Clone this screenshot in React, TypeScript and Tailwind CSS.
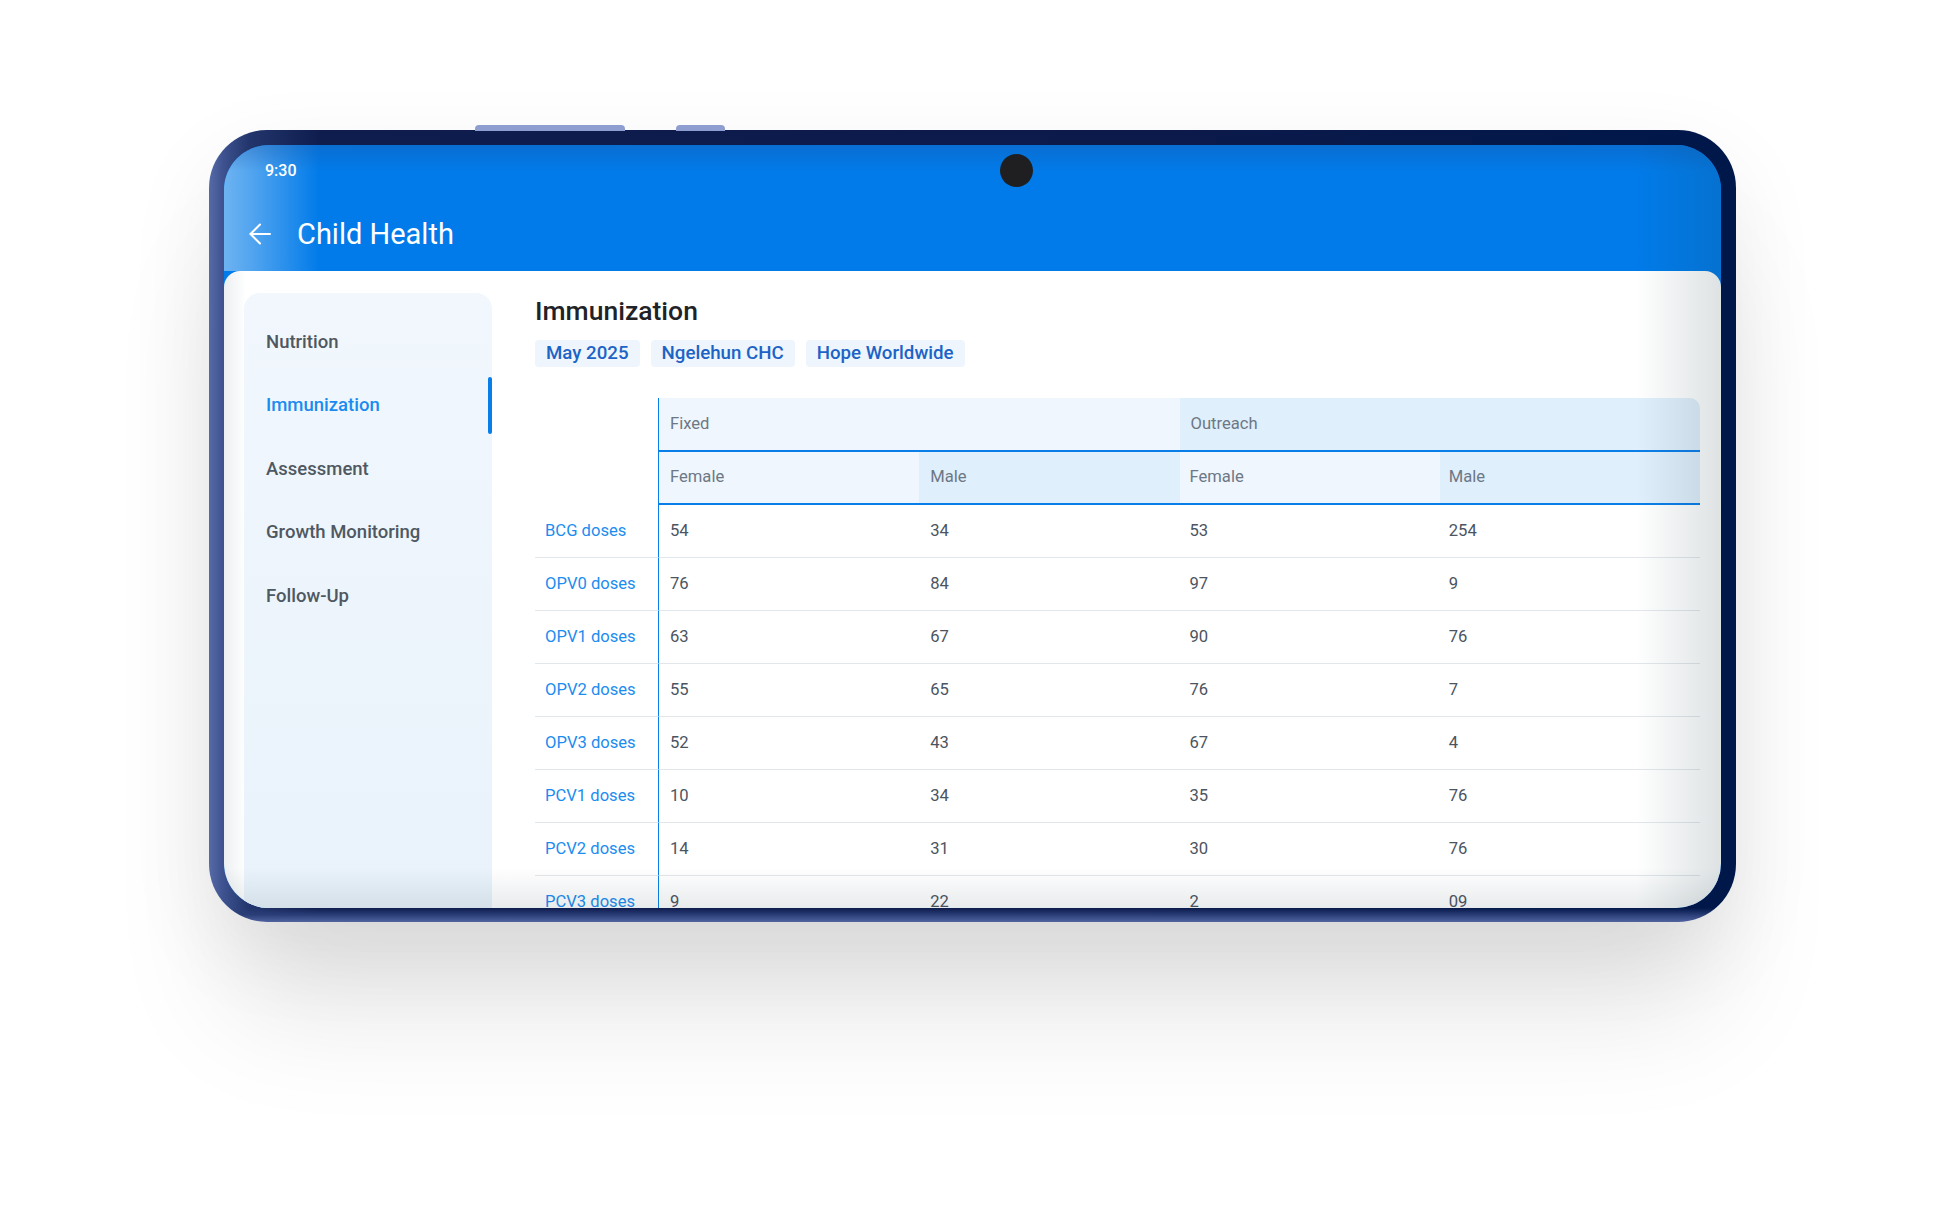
import React from 'react';

const rows: [string, string, string, string, string][] = [
  ['BCG doses', '54', '34', '53', '254'],
  ['OPV0 doses', '76', '84', '97', '9'],
  ['OPV1 doses', '63', '67', '90', '76'],
  ['OPV2 doses', '55', '65', '76', '7'],
  ['OPV3 doses', '52', '43', '67', '4'],
  ['PCV1 doses', '10', '34', '35', '76'],
  ['PCV2 doses', '14', '31', '30', '76'],
  ['PCV3 doses', '9', '22', '2', '09'],
];

const navItems = ['Nutrition', 'Immunization', 'Assessment', 'Growth Monitoring', 'Follow-Up'];
const chips = ['May 2025', 'Ngelehun CHC', 'Hope Worldwide'];

export default function App() {
  return (
    <div className="relative w-full h-[1214px] bg-white pt-[130px] pl-[209px] font-['Roboto','Liberation_Sans',sans-serif] overflow-hidden">
      {/* device */}
      <div className="relative w-[1527px] h-[792px] rounded-[58px] pt-[15px] px-[15px] pb-[14px] bg-[linear-gradient(to_top,#5064a0_0px,#2b3e78_7px,rgba(20,35,85,0)_14px),linear-gradient(to_right,#566ba6_0px,#3d528f_14px,#22356c_40px,#0f1d4e_110px,#0c1a4b_60%,#001749_100%)] shadow-[0_110px_120px_-20px_rgba(0,0,0,0.10),0_30px_90px_rgba(0,0,0,0.07)]">
        {/* side buttons on top edge */}
        <div className="absolute top-[-5px] left-[266px] w-[150px] h-[6px] rounded-t-[4px] bg-[#8e9ed1]" />
        <div className="absolute top-[-5px] left-[467px] w-[49px] h-[6px] rounded-t-[4px] bg-[#8e9ed1]" />

        {/* screen */}
        <div className="relative w-full h-full rounded-[45px] overflow-hidden bg-[#017be9] flex flex-col">
          {/* header */}
          <div className="h-[126px] shrink-0 flex flex-col text-white bg-[linear-gradient(to_bottom,rgba(25,85,165,0.35)_0px,rgba(25,85,165,0)_26px),linear-gradient(to_right,#6db3f1_0px,#4fa3ef_30px,#017be9_95px)]">
            <div className="relative h-[52px] flex items-center pl-[41px]">
              <span className="text-[16px] font-medium">9:30</span>
              <div className="absolute left-[776px] top-[9px] w-[33px] h-[33px] rounded-full bg-[#1f1f22]" />
            </div>
            <div className="flex-1 flex items-center pl-[25px] gap-[27px]">
              <svg width="22" height="22" viewBox="0 0 22 22" fill="none" stroke="white" strokeWidth="2" strokeLinecap="round" strokeLinejoin="round">
                <path d="M21 11H1.5" />
                <path d="M11 1.5 1.5 11l9.5 9.5" />
              </svg>
              <span className="text-[29px] leading-none -ml-[1px]">Child Health</span>
            </div>
          </div>

          {/* content */}
          <div className="flex-1 flex rounded-t-[16px] bg-[linear-gradient(to_right,#eceff1_0px,#ffffff_22px)] min-h-0">
            {/* sidebar */}
            <div className="ml-[20px] mt-[22px] w-[248px] shrink-0 rounded-t-[16px] bg-gradient-to-b from-[#f1f7fd] to-[#e9f2fb] pt-[18px]">
              {navItems.map((item) => {
                const active = item === 'Immunization';
                return (
                  <div key={item} className="relative h-[63.5px] flex items-center pl-[22px]">
                    <span className={`text-[18.5px] font-medium ${active ? 'text-[#1a8cf0]' : 'text-[#4f5861]'}`}>{item}</span>
                    {active && <div className="absolute right-0 top-[2px] bottom-[4px] w-[4px] rounded-full bg-[#0a7ee8]" />}
                  </div>
                );
              })}
            </div>

            {/* main */}
            <div className="flex-1 ml-[43px] pr-[21px] pt-[24px]">
              <h1 className="text-[26.5px] leading-[32px] font-medium text-[#1f2328]">Immunization</h1>
              <div className="mt-[13px] flex gap-[11px]">
                {chips.map((c) => (
                  <span key={c} className="px-[11px] h-[27px] leading-[27px] rounded-[4px] bg-[#eef5fd] text-[18.7px] font-medium text-[#1d63c6]">
                    {c}
                  </span>
                ))}
              </div>

              <div className="mt-[31px] grid grid-cols-[124px_1fr_1fr_1fr_1fr] text-[16.6px]">
                {/* header row 1 */}
                <div className="border-r border-[#0a7ee8]" />
                <div className="col-span-2 h-[54px] flex items-center pl-[11px] pt-[1px] bg-[#eff6fd] border-b-2 border-[#0a7ee8] text-[#6c7885]">Fixed</div>
                <div className="col-span-2 h-[54px] flex items-center pl-[11px] pt-[1px] bg-[#e0effc] rounded-tr-[10px] border-b-2 border-[#0a7ee8] text-[#6c7885]">Outreach</div>
                {/* header row 2 */}
                <div className="border-r border-[#0a7ee8]" />
                <div className="h-[53px] flex items-center pl-[11px] bg-[#eff6fd] border-b-2 border-[#0a7ee8] text-[#6c7885]">Female</div>
                <div className="h-[53px] flex items-center pl-[11px] bg-[#e0effc] border-b-2 border-[#0a7ee8] text-[#6c7885]">Male</div>
                <div className="h-[53px] flex items-center pl-[10px] bg-[#eff6fd] border-b-2 border-[#0a7ee8] text-[#6c7885]">Female</div>
                <div className="h-[53px] flex items-center pl-[9px] bg-[#e0effc] border-b-2 border-[#0a7ee8] text-[#6c7885]">Male</div>
                {/* body */}
                {rows.map((r) => (
                  <React.Fragment key={r[0]}>
                    <div className="h-[53px] flex items-center pl-[10px] border-r border-r-[#0a7ee8] border-b border-b-[#e2e7eb] text-[#1b8cf0]">{r[0]}</div>
                    {r.slice(1).map((v, i) => (
                      <div key={i} className={`h-[53px] flex items-center border-b border-[#e2e7eb] text-[#4b5461] ${i === 3 ? 'pl-[9px]' : i === 2 ? 'pl-[10px]' : 'pl-[11px]'}`}>{v}</div>
                    ))}
                  </React.Fragment>
                ))}
              </div>
            </div>
          </div>

          {/* glass shading */}
          <div className="absolute inset-y-0 right-0 w-[85px] pointer-events-none bg-[linear-gradient(to_right,rgba(30,60,70,0)_0%,rgba(30,60,70,0.15)_100%)]" />
          <div className="absolute inset-x-0 bottom-0 h-[40px] pointer-events-none bg-[linear-gradient(to_bottom,rgba(30,60,70,0)_0%,rgba(30,60,70,0.10)_100%)]" />
        </div>
      </div>
    </div>
  );
}
